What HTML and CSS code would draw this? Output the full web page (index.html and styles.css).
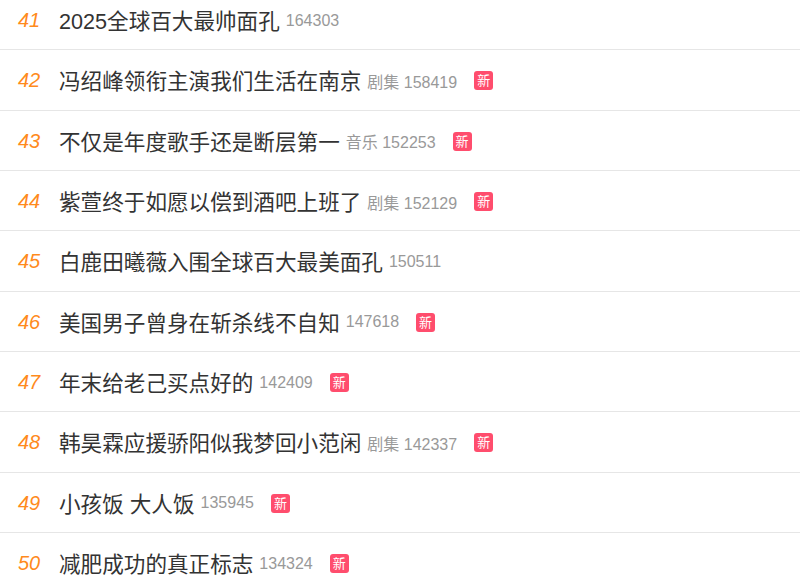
FILE: index.html
```html
<!DOCTYPE html>
<html>
<head>
  <meta charset="UTF-8" />
  <title>热搜榜</title>
  <link rel="stylesheet" href="styles.css">
</head>
<body>
  <ul class="hot-list">
    <li class="hot-item"><span class="rank">41</span><span class="title">2025全球百大最帅面孔</span><span class="meta">164303</span></li>
    <li class="hot-item"><span class="rank">42</span><span class="title">冯绍峰领衔主演我们生活在南京</span><span class="meta">剧集 158419</span><span class="badge">新</span></li>
    <li class="hot-item"><span class="rank">43</span><span class="title">不仅是年度歌手还是断层第一</span><span class="meta">音乐 152253</span><span class="badge">新</span></li>
    <li class="hot-item"><span class="rank">44</span><span class="title">紫萱终于如愿以偿到酒吧上班了</span><span class="meta">剧集 152129</span><span class="badge">新</span></li>
    <li class="hot-item"><span class="rank">45</span><span class="title">白鹿田曦薇入围全球百大最美面孔</span><span class="meta">150511</span></li>
    <li class="hot-item"><span class="rank">46</span><span class="title">美国男子曾身在斩杀线不自知</span><span class="meta">147618</span><span class="badge">新</span></li>
    <li class="hot-item"><span class="rank">47</span><span class="title">年末给老己买点好的</span><span class="meta">142409</span><span class="badge">新</span></li>
    <li class="hot-item"><span class="rank">48</span><span class="title">韩昊霖应援骄阳似我梦回小范闲</span><span class="meta">剧集 142337</span><span class="badge">新</span></li>
    <li class="hot-item"><span class="rank">49</span><span class="title">小孩饭 大人饭</span><span class="meta">135945</span><span class="badge">新</span></li>
    <li class="hot-item"><span class="rank">50</span><span class="title">减肥成功的真正标志</span><span class="meta">134324</span><span class="badge">新</span></li>
  </ul>
</body>
</html>
```

FILE: styles.css
```css
body {
  margin: 0;
  padding: 0;
  background: #fff;
  font-family: 'Liberation Sans', Arial, 'Noto Sans CJK SC', sans-serif;
  overflow: hidden;
}
.hot-list {
  list-style: none;
  margin: -10px 0 0 0;
  padding: 0;
}
.hot-item {
  box-sizing: border-box;
  height: 60.33px;
  display: flex;
  align-items: center;
  padding-left: 18px;
  border-bottom: 1px solid #e6e6e6;
}
.rank {
  width: 41px;
  flex-shrink: 0;
  margin-top: 2px;
  color: #ff8a1c;
  font-style: italic;
  font-size: 20px;
}
.title {
  color: #333;
  font-size: 21.6px;
}
.meta {
  color: #999;
  font-size: 16px;
  margin: 2px 0 0 6px;
}
.badge {
  width: 19px;
  height: 19px;
  margin: 2px 0 0 17px;
  border-radius: 3px;
  background: #ff4d6d;
  color: #fff;
  font-size: 13px;
  line-height: 19px;
  text-align: center;
}
```
